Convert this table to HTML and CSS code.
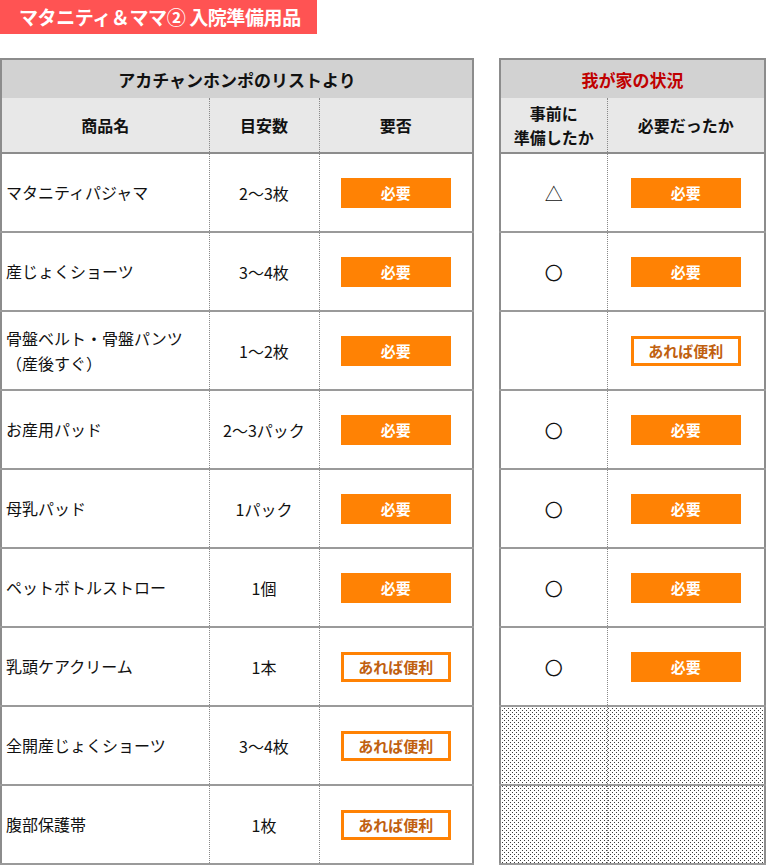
FILE: index.html
```html
<!DOCTYPE html>
<html lang="ja">
<head>
<meta charset="utf-8">
<link rel="stylesheet" href="styles.css">
</head>
<body>
<div class="title">マタニティ＆ママ② 入院準備用品</div>
<div class="tables">
  <table class="list left">
    <colgroup><col class="c1"><col class="c2"><col class="c3"></colgroup>
    <thead>
      <tr class="h1"><th colspan="3">アカチャンホンポのリストより</th></tr>
      <tr class="h2"><th>商品名</th><th class="dl">目安数</th><th class="dl">要否</th></tr>
    </thead>
    <tbody>
      <tr><td class="name">マタニティパジャマ</td><td class="dl">2～3枚</td><td class="dl"><span class="b need">必要</span></td></tr>
      <tr><td class="name">産じょくショーツ</td><td class="dl">3～4枚</td><td class="dl"><span class="b need">必要</span></td></tr>
      <tr><td class="name">骨盤ベルト・骨盤パンツ<br>（産後すぐ）</td><td class="dl">1～2枚</td><td class="dl"><span class="b need">必要</span></td></tr>
      <tr><td class="name">お産用パッド</td><td class="dl">2～3パック</td><td class="dl"><span class="b need">必要</span></td></tr>
      <tr><td class="name">母乳パッド</td><td class="dl">1パック</td><td class="dl"><span class="b need">必要</span></td></tr>
      <tr><td class="name">ペットボトルストロー</td><td class="dl">1個</td><td class="dl"><span class="b need">必要</span></td></tr>
      <tr><td class="name">乳頭ケアクリーム</td><td class="dl">1本</td><td class="dl"><span class="b nice">あれば便利</span></td></tr>
      <tr><td class="name">全開産じょくショーツ</td><td class="dl">3～4枚</td><td class="dl"><span class="b nice">あれば便利</span></td></tr>
      <tr><td class="name">腹部保護帯</td><td class="dl">1枚</td><td class="dl"><span class="b nice">あれば便利</span></td></tr>
    </tbody>
  </table>
  <table class="list right">
    <colgroup><col class="r1"><col class="r2"></colgroup>
    <thead>
      <tr class="h1"><th colspan="2" class="red">我が家の状況</th></tr>
      <tr class="h2"><th class="two">事前に<br>準備したか</th><th class="dl">必要だったか</th></tr>
    </thead>
    <tbody>
      <tr><td class="mark">△</td><td class="dl"><span class="b need">必要</span></td></tr>
      <tr><td class="mark">〇</td><td class="dl"><span class="b need">必要</span></td></tr>
      <tr><td class="mark"></td><td class="dl"><span class="b nice">あれば便利</span></td></tr>
      <tr><td class="mark">〇</td><td class="dl"><span class="b need">必要</span></td></tr>
      <tr><td class="mark">〇</td><td class="dl"><span class="b need">必要</span></td></tr>
      <tr><td class="mark">〇</td><td class="dl"><span class="b need">必要</span></td></tr>
      <tr><td class="mark">〇</td><td class="dl"><span class="b need">必要</span></td></tr>
      <tr class="dots"><td></td><td class="dl"></td></tr>
      <tr class="dots"><td></td><td class="dl"></td></tr>
    </tbody>
  </table>
</div>
</body>
</html>
```
FILE: styles.css
```css
* { box-sizing: border-box; }
body {
  margin: 0;
  background: #fff;
  font-family: "Noto Sans CJK JP", "Noto Sans", sans-serif;
  color: #111;
  width: 766px;
}
.title {
  width: 317px;
  height: 34px;
  background: #ff5353;
  color: #fff;
  font-weight: bold;
  font-size: 19px;
  line-height: 34px;
  padding-left: 19px;
  letter-spacing: -0.4px;
}
.tables {
  display: flex;
  align-items: flex-start;
  gap: 25px;
  margin-top: 24px;
}
.list {
  border-collapse: collapse;
  table-layout: fixed;
  border: 2px solid #8c8c8c;
}
.left { width: 472px; }
.right { width: 265px; }
.c1 { width: 208px; }
.c2 { width: 110px; }
.c3 { width: 154px; }
.r1 { width: 107px; }
.r2 { width: 158px; }
th, td {
  padding: 0;
  text-align: center;
  vertical-align: middle;
}
.h1 th {
  height: 39px;
  background: #d2d2d2;
  font-size: 17px;
  font-weight: bold;
}
.h1 th.red { color: #c00000; }
.h2 th {
  height: 55px;
  background: #e8e8e8;
  font-size: 16px;
  font-weight: bold;
  border-bottom: 2px solid #8c8c8c;
}
.h2 th.two { line-height: 24px; }
tbody td {
  height: 79px;
  font-size: 16px;
  border-bottom: 2px solid #9a9a9a;
}
.dl { border-left: 1px dotted #888; }
td.name {
  text-align: left;
  padding-left: 4px;
  line-height: 25px;
}
td.mark { font-size: 18px; }
.b {
  display: inline-block;
  width: 110px;
  height: 30px;
  line-height: 30px;
  font-size: 15px;
  font-weight: bold;
  vertical-align: middle;
}
.need {
  background: #ff8204;
  color: #fff;
}
.nice {
  border: 3px solid #ff8204;
  line-height: 24px;
  color: #c0600f;
  background: #fff;
}
.dots td {
  background-color: #fff;
  background-image:
    conic-gradient(from 270deg at 1px 1px, #3a3a3a 90deg, transparent 0),
    conic-gradient(from 270deg at 1px 1px, #3a3a3a 90deg, transparent 0);
  background-size: 4px 4px, 4px 4px;
  background-position: 0 0, 2px 2px;
  background-attachment: fixed, fixed;
}
```
